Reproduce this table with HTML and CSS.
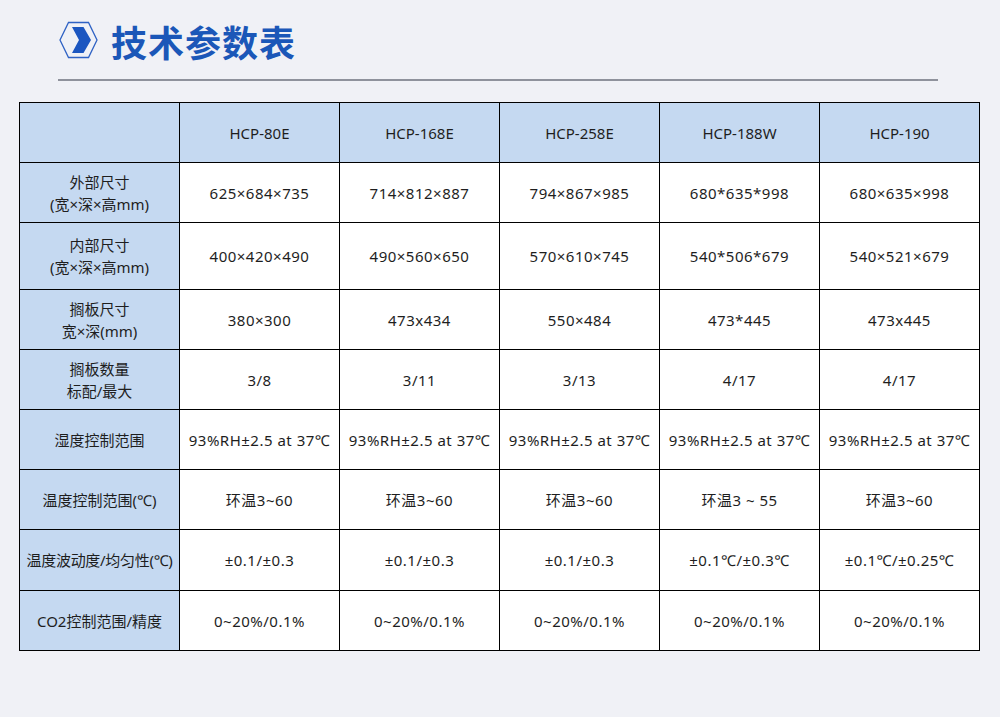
FILE: index.html
```html
<!DOCTYPE html>
<html lang="zh-CN">
<head>
<meta charset="utf-8">
<title>技术参数表</title>
<link rel="stylesheet" href="styles.css">
</head>
<body>
<div class="page">
  <header class="title-bar">
    <svg class="title-icon" width="40" height="40" viewBox="0 0 40 40">
      <polygon points="1,19 9.5,1.5 29.5,1.5 38,19 29.5,36.5 9.5,36.5" fill="none" stroke="#2f62c4" stroke-width="1.3"/>
      <polygon points="13,6 24.5,6 32,19 24.5,32 13,32 20,19" fill="#1c56c0"/>
    </svg>
    <h1 class="title">技术参数表</h1>
  </header>
  <div class="rule"></div>
  <table class="spec">
    <colgroup>
      <col class="c"><col class="c"><col class="c"><col class="c"><col class="c"><col class="c">
    </colgroup>
    <tr class="r-head">
      <th></th><th>HCP-80E</th><th>HCP-168E</th><th>HCP-258E</th><th>HCP-188W</th><th>HCP-190</th>
    </tr>
    <tr class="r60">
      <th>外部尺寸<br>(宽×深×高mm)</th><td>625×684×735</td><td>714×812×887</td><td>794×867×985</td><td>680*635*998</td><td>680×635×998</td>
    </tr>
    <tr class="r67">
      <th>内部尺寸<br>(宽×深×高mm)</th><td>400×420×490</td><td>490×560×650</td><td>570×610×745</td><td>540*506*679</td><td>540×521×679</td>
    </tr>
    <tr class="r60">
      <th>搁板尺寸<br>宽×深(mm)</th><td>380×300</td><td>473x434</td><td>550×484</td><td>473*445</td><td>473x445</td>
    </tr>
    <tr class="r60">
      <th>搁板数量<br>标配/最大</th><td>3/8</td><td>3/11</td><td>3/13</td><td>4/17</td><td>4/17</td>
    </tr>
    <tr class="r60">
      <th>湿度控制范围</th><td>93%RH±2.5 at 37℃</td><td>93%RH±2.5 at 37℃</td><td>93%RH±2.5 at 37℃</td><td>93%RH±2.5 at 37℃</td><td>93%RH±2.5 at 37℃</td>
    </tr>
    <tr class="r60">
      <th>温度控制范围(℃)</th><td>环温3~60</td><td>环温3~60</td><td>环温3~60</td><td>环温3 ~ 55</td><td>环温3~60</td>
    </tr>
    <tr class="r61">
      <th class="tight">温度波动度/均匀性(℃)</th><td>±0.1/±0.3</td><td>±0.1/±0.3</td><td>±0.1/±0.3</td><td>±0.1℃/±0.3℃</td><td>±0.1℃/±0.25℃</td>
    </tr>
    <tr class="r60">
      <th>CO2控制范围/精度</th><td>0~20%/0.1%</td><td>0~20%/0.1%</td><td>0~20%/0.1%</td><td>0~20%/0.1%</td><td>0~20%/0.1%</td>
    </tr>
  </table>
</div>
</body>
</html>
```

FILE: styles.css
```css
html, body {
  margin: 0;
  padding: 0;
  background: #f0f1f6;
}
body {
  font-family: "Noto Sans", "Noto Sans CJK SC", sans-serif;
  color: #1e1e1e;
}
.page {
  width: 1000px;
  height: 717px;
  padding-top: 21px;
  box-sizing: border-box;
}
.title-bar {
  display: flex;
  align-items: center;
  gap: 12px;
  padding-left: 59px;
  height: 40px;
}
.title-icon {
  display: block;
  flex: none;
}
.title {
  margin: 0;
  font-family: "Noto Sans CJK SC", sans-serif;
  font-size: 36px;
  font-weight: 700;
  line-height: 40px;
  color: #1b57b8;
  letter-spacing: 1px;
}
.rule {
  margin: 18px 0 0 58px;
  width: 880px;
  height: 2px;
  background: #8f929c;
}
.spec {
  margin: 21px 0 0 19px;
  border-collapse: collapse;
  table-layout: fixed;
  width: 961px;
  font-size: 15px;
}
.spec col.c {
  width: 160px;
}
.spec th, .spec td {
  border: 1.5px solid #000;
  text-align: center;
  vertical-align: middle;
  padding: 0;
  line-height: 22px;
  font-weight: 400;
  white-space: nowrap;
}
.spec th {
  background: #c5d9f1;
}
.spec td {
  background: #fff;
  letter-spacing: 0.5px;
}
.spec th.tight {
  letter-spacing: -0.3px;
}
.r-head { height: 60px; }
.r60 { height: 60px; }
.r61 { height: 61px; }
.r67 { height: 67px; }
```
